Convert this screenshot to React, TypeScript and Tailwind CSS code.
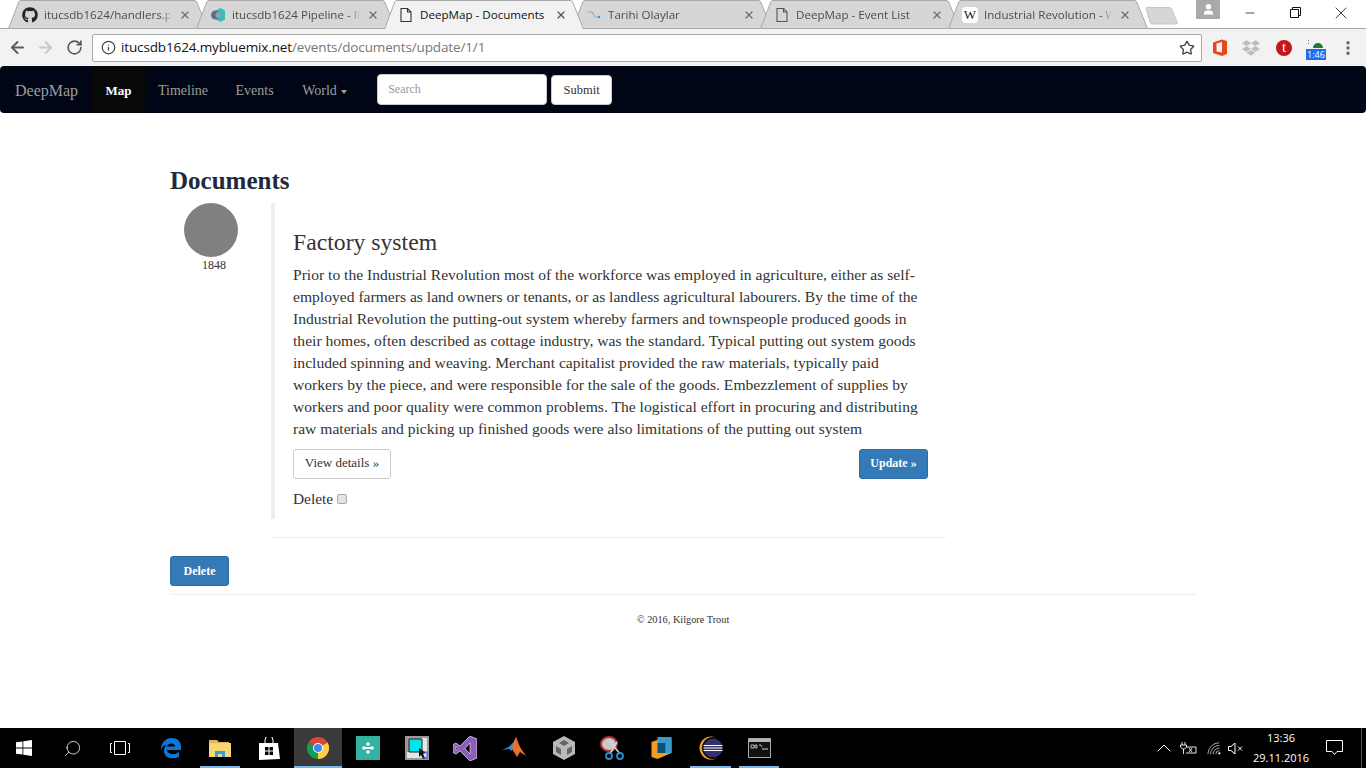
import React from "react";
import { FaGithub, FaDropbox } from "react-icons/fa";
import { ArrowLeft, ArrowRight, RotateCw, Info, Star, X, Minus, ChevronUp, Search, EllipsisVertical, User } from "lucide-react";

function Doc({ c = "#555" }: { c?: string }) {
  return (
    <svg width="16" height="16" viewBox="0 0 16 16" fill="none" stroke={c} strokeWidth="1.1">
      <path d="M3 1.5h6.5L13 5v9.5H3z" />
      <path d="M9.5 1.5V5H13" />
    </svg>
  );
}

function Pipeline() {
  return (
    <svg width="16" height="16" viewBox="0 0 16 16">
      <path d="M10.5 1l4.500 2.500v9L10.500 15 6 12.500v-9z" fill="#2fc0bb" />
      <circle cx="5.500" cy="8" r="4.500" fill="#5b6f86" />
      <circle cx="8.500" cy="8" r="3" fill="#8fa0b0" />
    </svg>
  );
}

function Tarihi() {
  return (
    <svg width="16" height="16" viewBox="0 0 16 16" fill="none" stroke="#8fb4d8" strokeWidth="1.2">
      <path d="M1 5h5l3 5h4" />
      <path d="M5 5l3 2" />
      <circle cx="13" cy="10" r="1.300" fill="#4a90d9" stroke="none" />
    </svg>
  );
}

function Wiki() {
  return (
    <span className="w-4 h-4 bg-white rounded-sm flex items-center justify-center text-[13px] leading-none text-[#222] font-['Liberation_Serif',serif]">W</span>
  );
}

function Tab({ icon, title, active }: { icon: React.ReactNode; title: string; active?: boolean }) {
  return (
    <div className={`relative w-[200px] h-[29px] -ml-[12px] first:ml-0 shrink-0 ${active ? "z-10" : ""}`}>
      <svg className="absolute inset-0" width="200" height="29" viewBox="0 0 200 29">
        <path
          d={active ? "M0.5 29 L11 1.5 Q11.5 0.5 13 0.5 H186 Q187.5 0.5 188.5 1.5 L199.5 29" : "M0.5 28.5 L11 1.5 Q11.5 0.5 13 0.5 H186 Q187.5 0.5 188.5 1.5 L199.5 28.5 Z"}
          fill={active ? "#f2f2f2" : "#d6d6d6"}
          stroke="#a8a8a8"
        />
      </svg>
      <div className="relative h-[29px] pl-[14px] flex items-center gap-[6px] font-['Open_Sans',sans-serif]">
        <span className="w-4 h-4 flex items-center justify-center shrink-0">{icon}</span>
        <span className={`w-[128px] overflow-hidden whitespace-nowrap text-[11.6px] ${active ? "text-[#111]" : "text-[#4c4c4c] [mask-image:linear-gradient(to_right,black_92%,transparent)]"}`}>{title}</span>
        <X size={12} strokeWidth={2.6} className={`ml-[1px] shrink-0 ${active ? "text-[#555]" : "text-[#707070]"}`} />
      </div>
    </div>
  );
}

function TitleBar() {
  return (
    <div className="relative h-[29px] bg-white flex border-b border-[#a8a8a8]">
      <div className="flex pl-[8px]">
        <Tab icon={<FaGithub size={16} color="#222" />} title="itucsdb1624/handlers.py" />
        <Tab icon={<Pipeline />} title="itucsdb1624 Pipeline - IBM" />
        <Tab active icon={<Doc c="#333" />} title="DeepMap - Documents" />
        <Tab icon={<Tarihi />} title="Tarihi Olaylar" />
        <Tab icon={<Doc />} title="DeepMap - Event List" />
        <Tab icon={<Wiki />} title="Industrial Revolution - Wiki" />
      </div>
      <svg className="mt-[7px] -ml-[3px]" width="34" height="18" viewBox="0 0 36 18" preserveAspectRatio="none">
        <path d="M1 1.500 Q1 .5 2 .5 H26 Q27 .5 28 1.500 L34 15 Q34.500 17 33 17 H8 Q6 17 5.500 15.500 Z" fill="#d6d6d6" stroke="#c4c4c4" />
      </svg>
      <div className="ml-[17px] w-[24px] h-[19px] bg-[#a9a9a9] flex items-center justify-center text-white">
        <User size={13} fill="white" strokeWidth={2} />
      </div>
      <div className="flex ml-[7px] h-[28px]">
        <span className="w-[46px] flex items-center justify-center pb-[3px]"><Minus size={14} strokeWidth={1.2} className="text-black" /></span>
        <span className="w-[45px] flex items-center justify-center pb-[3px]">
          <svg width="11" height="11" viewBox="0 0 11 11" fill="none" stroke="#111"><path d="M.5 2.500H8.500v8H.5z" /><path d="M2.500 2.500V.5h8v8H8.500" /></svg>
        </span>
        <span className="w-[46px] flex items-center justify-center pb-[3px]"><X size={20} strokeWidth={0.9} className="text-black" /></span>
      </div>
    </div>
  );
}

function Toolbar() {
  return (
    <div className="h-[37px] bg-[#f2f2f2] flex items-center">
      <div className="w-[92px] flex items-center shrink-0 pl-[8px] gap-[9px]">
        <ArrowLeft size={19} strokeWidth={2.4} className="text-[#5a5a5a]" />
        <ArrowRight size={19} strokeWidth={2.4} className="text-[#c8c8c8]" />
        <RotateCw size={17} strokeWidth={2.4} className="text-[#5a5a5a] ml-[2px]" />
      </div>
      <div className="w-[1110px] h-[28px] bg-white border border-[#a9a9a9] rounded-[2px] flex items-center pl-[8px] pr-[6px] font-['Open_Sans',sans-serif]">
        <Info size={15} strokeWidth={2} className="text-[#444] shrink-0" />
        <span className="ml-[5px] text-[13.5px] tracking-[-0.01em] text-[#111]">itucsdb1624.mybluemix.net<span className="text-[#777]">/events/documents/update/1/1</span></span>
        <Star size={16} strokeWidth={2} className="ml-auto text-[#444]" />
      </div>
      <div className="flex items-center ml-[10px]">
        <svg width="16" height="17" viewBox="0 0 16 17"><path d="M1 3.500 10 .5l5 1.500v13l-5 2-9-3zM10 3 4.500 4.500v8L10 13.500z" fill="#e3491a" fillRule="evenodd" /></svg>
        <FaDropbox size={18} className="text-[#bdbdbd] ml-[14px]" />
        <span className="ml-[16px] w-4 h-4 rounded-full bg-[#c4161c] text-white text-[15px] leading-[15px] text-center font-['Liberation_Serif',serif]">t</span>
        <div className="relative ml-[14px] w-[20px] h-[22px]">
          <span className="absolute top-[3px] left-[2px] w-[1px] h-[1px] bg-[#777]" />
          <span className="absolute top-[6px] left-[2px] w-[1px] h-[1px] bg-[#777]" />
          <svg width="12" height="8" viewBox="0 0 12 8" className="absolute top-[3px] left-[6px]"><path d="M1 8a5 5 0 0 1 10 0z" fill="#1e7a34" /></svg>
          <span className="absolute left-0 bottom-[-1px] w-[20px] h-[11px] bg-[#1a6ff0] text-white text-[9px] leading-[11px] text-center font-['Open_Sans',sans-serif]">1:46</span>
        </div>
        <EllipsisVertical size={18} strokeWidth={2.6} className="text-[#666] ml-[13px]" />
      </div>
    </div>
  );
}

function Navbar() {
  return (
    <nav className="h-[47px] bg-[#000615] rounded-[4px] flex text-[14px] text-[#9d9d9d] font-['Liberation_Serif',serif]">
      <a className="w-[92px] pl-[15px] text-[16px] pt-[2px] leading-[45px]">DeepMap</a>
      <a className="w-[53px] text-center text-[13px] pt-[2px] leading-[45px] bg-[#080808] text-white font-bold">Map</a>
      <a className="pl-[13px] pr-[14.5px] pt-[2px] leading-[45px]">Timeline</a>
      <a className="pl-[13px] pr-[14.5px] pt-[2px] leading-[45px]">Events</a>
      <a className="pl-[14px] w-[89px] pt-[2px] leading-[45px] flex items-center shrink-0">
        World
        <span className="ml-[4px] mt-[2px] w-0 h-0 border-x-[3.5px] border-x-transparent border-t-[4px] border-t-[#9d9d9d]" />
      </a>
      <div className="flex items-start pt-[8px] gap-[4px]">
        <div className="w-[170px] h-[31px] bg-white border border-[#ccc] rounded-[4px] pl-[10px] text-[12px] leading-[28px] text-[#999]">Search</div>
        <button className="w-[61px] h-[30px] mt-[1px] bg-white border border-[#ccc] rounded-[4px] text-[12.5px] text-[#333]">Submit</button>
      </div>
    </nav>
  );
}

function Main() {
  return (
    <main className="flex-1 bg-white font-['Liberation_Serif',serif] text-[#333]">
      <div className="ml-[170px] w-[1026px] pt-[55px]">
        <h1 className="text-[25px] leading-[26px] font-bold text-[#1f2a3c] mb-[9px]">Documents</h1>
        <div className="flex">
          <div className="w-[101px] shrink-0">
            <div className="w-[54px] h-[54px] ml-[14px] rounded-full bg-[#808080]" />
            <p className="w-[88px] text-center text-[12px] leading-[17px]">1848</p>
          </div>
          <article className="w-[657px] border-l-[4px] border-[#eeeeee] pl-[18px] pr-0 pt-[26px] pb-[9px]">
            <h2 className="text-[23.7px] leading-[26px] text-[#333]">Factory system</h2>
            <p className="mt-[9px] w-[632px] text-[15.6px] leading-[22px]">
              Prior to the Industrial Revolution most of the workforce was employed in agriculture, either as self-employed farmers as land owners or tenants, or as landless agricultural labourers. By the time of the Industrial Revolution the putting-out system whereby farmers and townspeople produced goods in their homes, often described as cottage industry, was the standard. Typical putting out system goods included spinning and weaving. Merchant capitalist provided the raw materials, typically paid workers by the piece, and were responsible for the sale of the goods. Embezzlement of supplies by workers and poor quality were common problems. The logistical effort in procuring and distributing raw materials and picking up finished goods were also limitations of the putting out system
            </p>
            <div className="mt-[9px] w-[635px] flex justify-between">
              <button className="w-[98px] h-[30px] pb-[2px] bg-white border border-[#ccc] rounded-[3px] text-[13px] text-[#333]">View details »</button>
              <button className="w-[69px] h-[30px] pb-[2px] bg-[#337ab7] border border-[#2e6da4] rounded-[3px] text-[12px] font-bold text-white">Update »</button>
            </div>
            <div className="mt-[9px] h-[22px] flex items-center text-[15.4px] leading-[22px]">
              Delete
              <input type="checkbox" className="ml-[4px] w-[10px] h-[10px] m-0 appearance-none bg-[#e4e4e4] border border-[#a8a8a8] rounded-[2px]" />
            </div>
          </article>
        </div>
        <hr className="ml-[101px] w-[675px] mt-[18px] border-t border-[#eeeeee]" />
        <button className="block mt-[18px] w-[59px] h-[30px] bg-[#337ab7] border border-[#2e6da4] rounded-[3px] text-[12px] font-bold text-white">Delete</button>
        <hr className="mt-[8px] border-t border-[#eeeeee]" />
        <p className="mt-[18px] text-center text-[10.3px] leading-[14px]">© 2016, Kilgore Trout</p>
      </div>
    </main>
  );
}

function TaskItem({ w, active, line, children }: { w: number; active?: boolean; line?: boolean; children: React.ReactNode }) {
  return (
    <div style={{ width: w }} className={`relative h-[40px] flex items-center justify-center shrink-0 ${active ? "bg-[#3a3a3a]" : ""}`}>
      {children}
      {line && <span className={`absolute bottom-0 h-[2px] bg-[#76b9ed] ${active ? "left-0 right-0" : "left-[4px] right-[4px]"}`} />}
    </div>
  );
}

function Taskbar() {
  return (
    <footer className="h-[40px] bg-black flex items-center text-white font-['Open_Sans',sans-serif]">
      <div className="w-[48px] flex justify-center shrink-0">
        <svg width="16" height="16" viewBox="0 0 16 16" fill="white"><path d="M0 2.300 6.500 1.400v6.200H0zM7.300 1.300 16 0v7.600H7.300zM0 8.400h6.500v6.200L0 13.700zM7.300 8.400H16V16l-8.700-1.200z" /></svg>
      </div>
      <div className="w-[48px] flex justify-center shrink-0"><Search size={19} strokeWidth={1} className="scale-x-[-1]" /></div>
      <div className="w-[48px] flex justify-center shrink-0">
        <svg width="20" height="14" viewBox="0 0 20 14" fill="none" stroke="white"><path d="M4.500.5h11v13h-11zM2 2.500H.5v9H2M18 2.500h1.500v9H18" /></svg>
      </div>
      <div className="flex ml-[2px]">
        <TaskItem w={50}>
          <svg width="20" height="21" viewBox="0 0 20 21"><path fill="#0a78d7" fillRule="evenodd" d="M0 10C1 3 6 0 11 0c5 0 9 3 9 9v3H6c.5 4 6 6 12 2v5c-7 3-15 1-15-6 0-3 1-5 3-6.500C3 7 1 9 0 12zM6 8.500h8c0-4-7-4-8 0z" /></svg>
        </TaskItem>
        <TaskItem w={48} line>
          <svg width="22" height="18" viewBox="0 0 22 18"><path d="M0 1h8l2 2h10v2H0z" fill="#e2b64a" /><path d="M0 4h22v14H0z" fill="#f7d774" /><path d="M6 12h10v6H6z" fill="#3a9be0" /><path d="M9 15h4v3H9z" fill="#f7d774" /></svg>
        </TaskItem>
        <TaskItem w={50}>
          <svg width="21" height="23" viewBox="0 0 21 23" fill="none"><path d="M6 6V3a4 4 0 0 1 8 0v3" stroke="white" /><path fillRule="evenodd" d="M0 6h19l2 16-21 1zM6 10v3.500h3.500V10zM10.500 10v3.500H14V10zM6 14.500V18h3.500v-3.500zM10.500 14.500V18H14v-3.500z" fill="white" /></svg>
        </TaskItem>
        <TaskItem w={48} active line>
          <svg width="22" height="22" viewBox="0 0 22 22">
            <path d="M11 11 1.470 5.500A11 11 0 0 1 20.530 5.500z" fill="#db4437" />
            <path d="M11 11 20.530 5.500A11 11 0 0 1 11 22z" fill="#ffcd40" />
            <path d="M11 11 11 22A11 11 0 0 1 1.470 5.500z" fill="#0f9d58" />
            <circle cx="11" cy="11" r="5" fill="white" />
            <circle cx="11" cy="11" r="4" fill="#4285f4" />
          </svg>
        </TaskItem>
        <TaskItem w={51}>
          <div className="w-[24px] h-[24px] bg-[#34b3a5] flex items-center justify-center">
            <svg width="12" height="12" viewBox="0 0 12 12" fill="white"><circle cx="6" cy="2" r="1.800" /><circle cx="6" cy="10" r="1.800" /><circle cx="2" cy="6" r="1.800" /><circle cx="10" cy="6" r="1.800" /><path d="M2 5h8v2H2z" /></svg>
          </div>
        </TaskItem>
        <TaskItem w={48}>
          <svg width="24" height="24" viewBox="0 0 24 24"><path d="M0 0h24v24H0z" fill="#9a9a9a" /><path d="M16 2h6v20H2v-6h14z" fill="#e6e6e6" /><path d="M4 3h13v13H4z" fill="#00e5ee" stroke="#222" /><path d="M14 12l7 5-3 1 2 4-2 1-2-4-2 2z" fill="#111" /><path d="M18 16h4v6h-4" fill="none" stroke="#2f4de0" /></svg>
        </TaskItem>
        <TaskItem w={48}>
          <svg width="24" height="25" viewBox="0 0 24 25"><path fillRule="evenodd" d="M17 0l7 3v19l-7 3L7 15l-4 3-3-1.500v-8L3 7l4 3zM17 7l-5 5.500 5 5.500zM3 10.500v4l2-2z" fill="#8c5dbb" stroke="white" strokeWidth=".6" /></svg>
        </TaskItem>
        <TaskItem w={50}>
          <svg width="24" height="22" viewBox="0 0 24 22"><path d="M0 13l7-3 4-4 3-6 4 10 6 9-6-4-3 5-5-8-3-2z" fill="#e8702a" /><path d="M0 13l7-3 4-4-1 8-3-2z" fill="#2f8fd8" /></svg>
        </TaskItem>
        <TaskItem w={49}>
          <svg width="22" height="24" viewBox="0 0 22 24"><path d="M11 0l11 6v12l-11 6-11-6V6z" fill="#b9b9b9" /><path d="M11 4l5 3-5 3-5-3zM3 10l5 3v6l-5-3zM19 10l-5 3v6l5-3z" fill="#666" /></svg>
        </TaskItem>
        <TaskItem w={48}>
          <svg width="24" height="24" viewBox="0 0 24 24"><ellipse cx="9" cy="8" rx="8" ry="7" fill="#c9c9c9" stroke="#b03030" strokeWidth="2" /><path d="M9 4l11 14M17 6 10 18" stroke="#cfd8dc" strokeWidth="1.500" /><circle cx="9" cy="20" r="3" fill="none" stroke="#2a8fd0" strokeWidth="1.800" /><circle cx="20" cy="20" r="3" fill="none" stroke="#2a8fd0" strokeWidth="1.800" /></svg>
        </TaskItem>
        <TaskItem w={50}>
          <svg width="21" height="22" viewBox="0 0 20 22"><path d="M0 5l14-5 6 2v14l-14 6-6-2z" fill="#f29c1f" /><path d="M6 0h14v16H14V6H6z" fill="#3a9bc9" /><path d="M6 6h8v10H6z" fill="#0b4f7a" /></svg>
        </TaskItem>
        <TaskItem w={49} line>
          <svg width="24" height="24" viewBox="0 0 24 24"><circle cx="12" cy="12" r="11.500" fill="#f0a020" /><circle cx="14" cy="12" r="11" fill="#000" /><circle cx="14" cy="12" r="9.500" fill="#35306e" /><path d="M4.500 9.500h19M4.500 12h19M4.500 14.500h19" stroke="white" strokeWidth="1" /></svg>
        </TaskItem>
        <TaskItem w={48} line>
          <svg width="23" height="20" viewBox="0 0 23 20"><path d="M.5.5h22v19H.5z" fill="#111" stroke="#aaa" /><path d="M1 1h21v3H1z" fill="#b5b5b5" /><path d="M3 7h3v3H3zM7 7h2v3H7zM11 7h2l1 2" stroke="#ddd" fill="none" strokeWidth=".8" /><path d="M14 11h6" stroke="#ddd" /></svg>
        </TaskItem>
      </div>
      <div className="ml-auto flex items-center pr-[4px]">
        <ChevronUp size={24} strokeWidth={1} />
        <svg className="ml-[4px]" width="17" height="13" viewBox="0 0 17 13" fill="none" stroke="white" strokeWidth=".9"><path d="M2 0v3M5 0v3M.5 3h6v2L4.500 7H2.500L.5 5zM3.500 7v5M6 5h10v6H6" /><path d="M9 6l3 4M12 6l-3 4" /></svg>
        <svg className="ml-[10px]" width="15" height="15" viewBox="0 0 17 15" fill="none" stroke="#cfcfcf"><path d="M1 14A13 13 0 0 1 14 1M4 14a10 10 0 0 1 10-10M7 14a7 7 0 0 1 7-7M10 14a4 4 0 0 1 4-4" strokeWidth=".9" /><circle cx="14" cy="13" r="1.300" fill="white" stroke="none" /></svg>
        <svg className="ml-[6px]" width="16" height="13" viewBox="0 0 16 13" fill="none" stroke="white"><path d="M.5 4.500H3L7 1v11L3 8.500H.5z" /><path d="M10 4.500l4 4M14 4.500l-4 4" /></svg>
        <div className="w-[62px] ml-[6px] text-center text-[11px] leading-[20px] whitespace-nowrap">
          <div>13:36</div>
          <div>29.11.2016</div>
        </div>
        <div className="w-[50px] h-[40px] border-r border-[#555] flex items-center justify-center pr-[5px]">
          <svg width="17" height="16" viewBox="0 0 17 16" fill="none" stroke="white"><path d="M.5.5h16v11H11l-2.500 3-2.500-3H.5z" /></svg>
        </div>
      </div>
    </footer>
  );
}

export default function App() {
  return (
    <div className="w-[1366px] h-[768px] flex flex-col overflow-hidden bg-white">
      <TitleBar />
      <Toolbar />
      <Navbar />
      <Main />
      <Taskbar />
    </div>
  );
}
